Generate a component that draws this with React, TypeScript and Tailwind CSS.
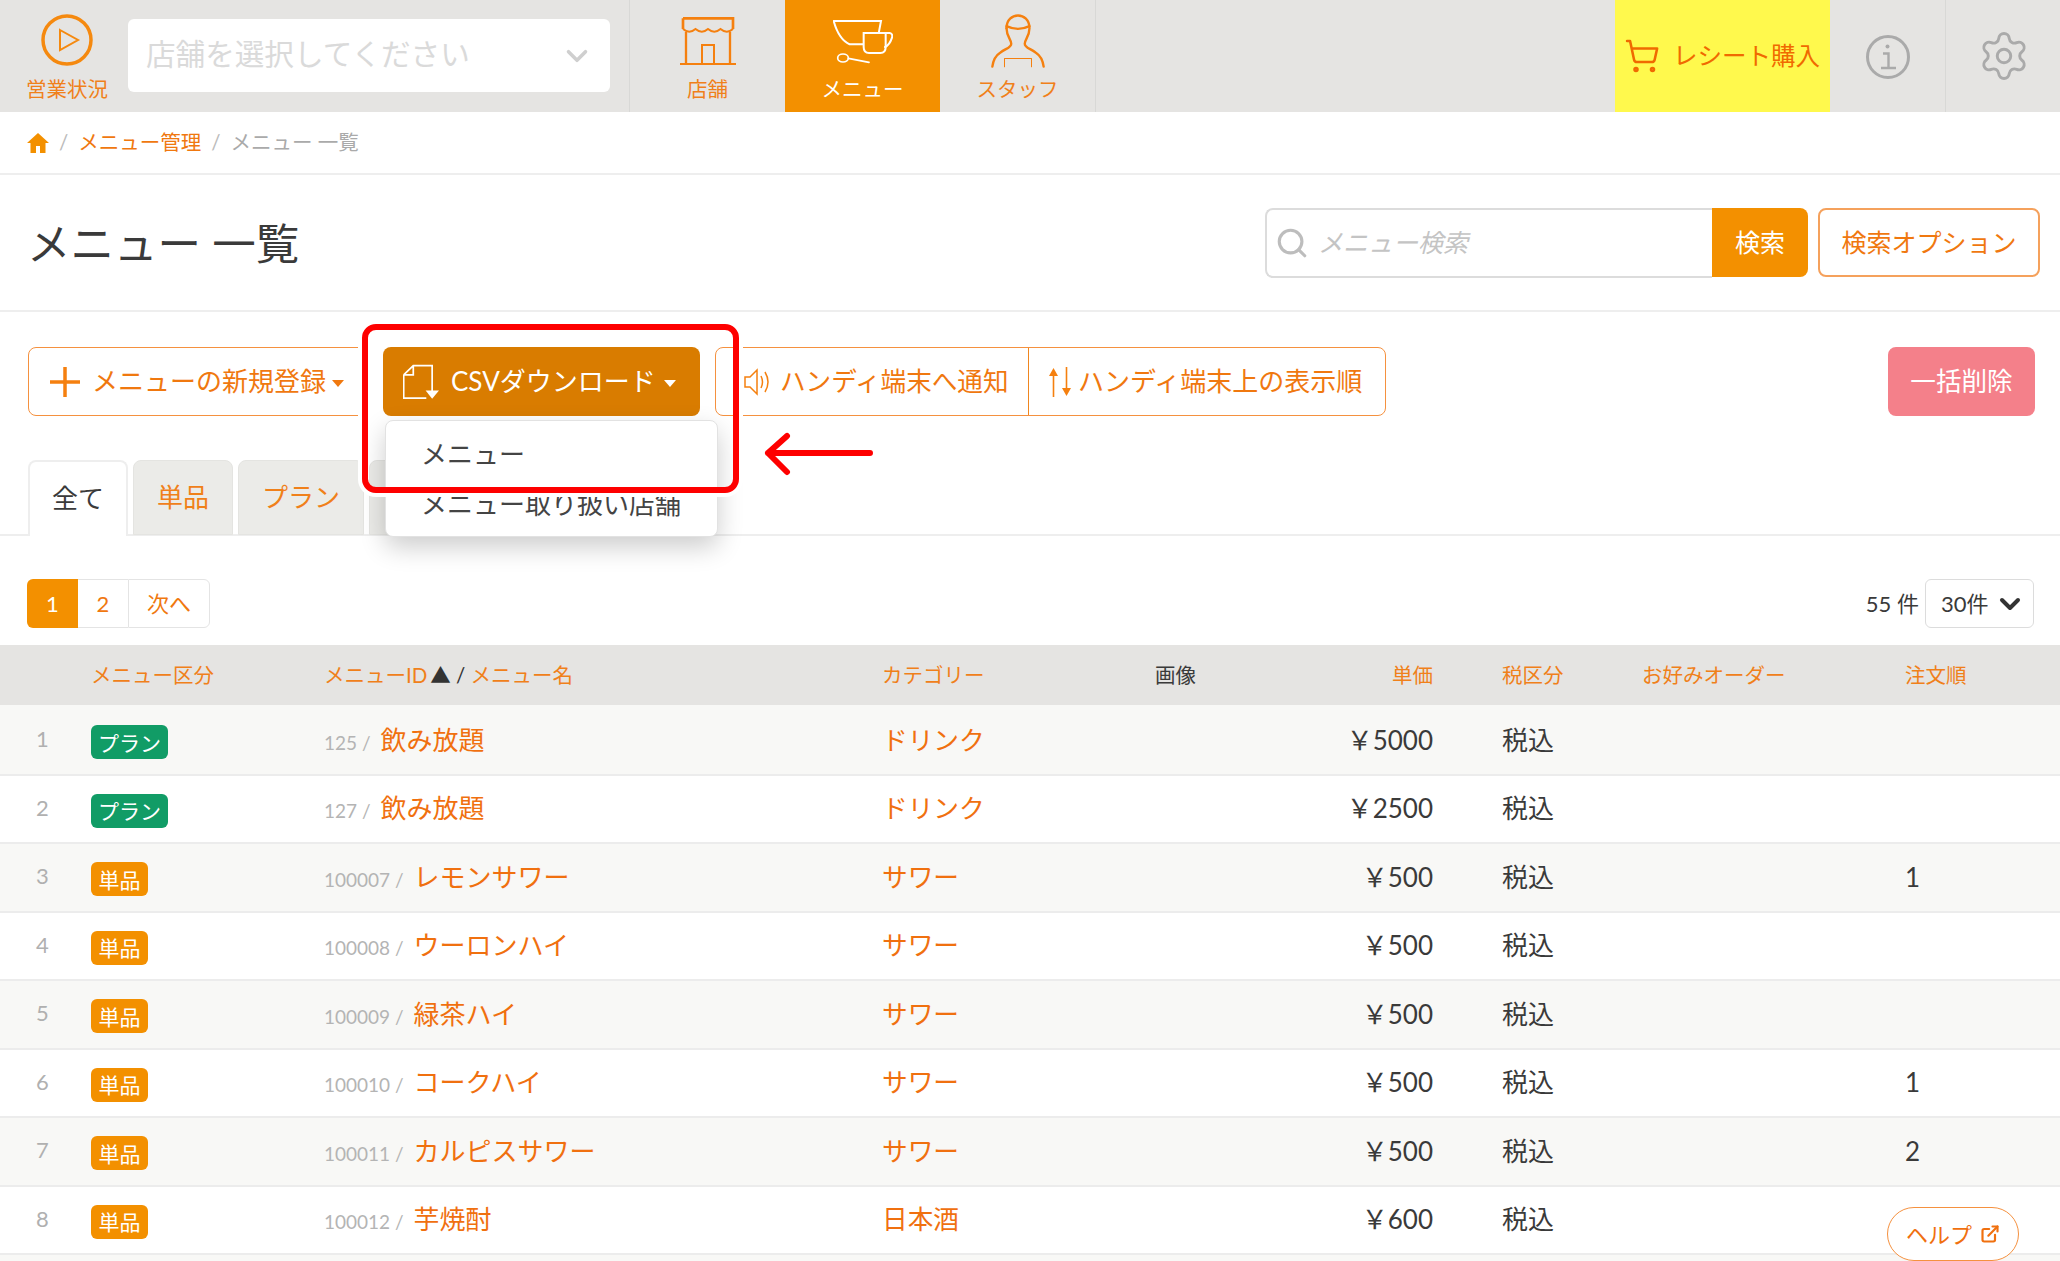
import { ChevronDown, ExternalLink, Search, Settings, ShoppingCart } from "lucide-react";

const cols = "grid grid-cols-[91px_233px_558px_273px_95px_183px_209px_263px_155px] items-center";

type Row = { kind: "plan" | "item"; id: string; name: string; category: string; price: string; order?: string };

const rows: Row[] = [
  { kind: "plan", id: "125", name: "飲み放題", category: "ドリンク", price: "5000" },
  { kind: "plan", id: "127", name: "飲み放題", category: "ドリンク", price: "2500" },
  { kind: "item", id: "100007", name: "レモンサワー", category: "サワー", price: "500", order: "1" },
  { kind: "item", id: "100008", name: "ウーロンハイ", category: "サワー", price: "500" },
  { kind: "item", id: "100009", name: "緑茶ハイ", category: "サワー", price: "500" },
  { kind: "item", id: "100010", name: "コークハイ", category: "サワー", price: "500", order: "1" },
  { kind: "item", id: "100011", name: "カルピスサワー", category: "サワー", price: "500", order: "2" },
  { kind: "item", id: "100012", name: "芋焼酎", category: "日本酒", price: "600" },
];

function PlayIcon() {
  return (
    <svg width="54" height="54" viewBox="0 0 54 54" fill="none" stroke="#f5890f">
      <circle cx="27" cy="27" r="24" strokeWidth="3.5" />
      <path d="M20 17 L38 27 L20 37 Z" strokeWidth="2" />
    </svg>
  );
}

function StoreIcon() {
  return (
    <svg width="56" height="48" viewBox="0 0 168 144" fill="none" stroke="#f5800f" strokeWidth="6">
      <path d="M9 4 H159 V36 M9 4 V36" strokeWidth="8" />
      <path d="M9 36 q19 16 37.5 0 q19 16 37.5 0 q19 16 37.5 0 q19 16 37.5 0" />
      <path d="M18 45 V140 M150 45 V140" strokeWidth="7" />
      <path d="M66 140 V84 H102 V140" />
      <path d="M0 141 H168" />
    </svg>
  );
}

function CupIcon() {
  return (
    <svg width="60" height="46" viewBox="0 0 180 138" fill="none" stroke="#fff" strokeWidth="6" strokeLinecap="round">
      <path d="M2 6 H144 L138 38 M2 6 C10 35 25 65 50 76 H90" />
      <path d="M92 42 H158 V84 Q158 102 142 102 H108 Q92 102 92 84 Z" />
      <path d="M158 42 H170 Q180 44 177 56 Q170 78 156 84" />
      <ellipse cx="30" cy="117" rx="16" ry="12" strokeWidth="5" />
      <path d="M46 118 L108 130" strokeWidth="5" />
    </svg>
  );
}

function StaffIcon() {
  return (
    <svg
      className="mb-[-3px]"
      width="54"
      height="54"
      viewBox="0 0 160 160"
      fill="none"
      stroke="#f5800f"
      strokeWidth="7"
      strokeLinecap="round"
    >
      <path d="M46 42 C46 -8 114 -8 114 42 C114 66 100 76 100 88 C100 100 116 102 132 114 C148 124 154 140 156 156" />
      <path d="M46 42 C46 66 60 76 60 88 C60 100 44 102 28 114 C12 124 6 140 4 156" />
      <path d="M46 36 Q80 52 114 36" />
      <path d="M40 132 H120 M40 132 V156 M120 132 V156" strokeWidth="3" />
    </svg>
  );
}

function InfoIcon() {
  return (
    <svg className="mt-[2px]" width="46" height="46" viewBox="0 0 46 46" fill="none" stroke="#aaa" strokeWidth="3">
      <circle cx="23" cy="23" r="20.5" />
      <circle cx="22.5" cy="12.5" r="2" fill="#aaa" stroke="none" />
      <path d="M18 19.5 H23.5 V33.5 M16 34 H31" strokeWidth="2.4" />
    </svg>
  );
}

function CsvIcon() {
  return (
    <svg width="36" height="36" viewBox="0 0 105 102" fill="none" stroke="#fff" strokeWidth="5">
      <path d="M2 30 L30 3 H85 V78 M2 30 V98 H68 M2 30 H30 V3" />
      <path d="M66 76 H105 L85 100 Z" fill="#fff" stroke="none" />
    </svg>
  );
}

function SpeakerIcon() {
  return (
    <svg width="26" height="28" viewBox="0 0 26 28" fill="none" stroke="#f5800f" strokeWidth="1.5">
      <path d="M1 9 H6 L13 2 V26 L6 19 H1 Z" />
      <path d="M17 8 Q20 14 17 20 M21 4 Q27 14 21 24" />
    </svg>
  );
}

function SortIcon() {
  return (
    <svg width="22" height="30" viewBox="0 0 22 30" fill="#f5800f" stroke="#f5800f" strokeWidth="1.6">
      <path d="M4.5 8 V30 M17.5 0 V22" fill="none" />
      <path d="M4.5 1 L9 9 H0 Z M17.5 29 L22 21 H13 Z" stroke="none" />
    </svg>
  );
}

function HomeIcon() {
  return (
    <svg width="22" height="20" viewBox="0 0 22 20" fill="#f39000">
      <path d="M11 0 L22 10 H18.5 V20 H13 V13 H9 V20 H3.5 V10 H0 Z" />
    </svg>
  );
}

function Caret({ white }: { white?: boolean }) {
  return (
    <span
      className={
        white
          ? "mt-[3px] h-0 w-0 border-x-[6px] border-t-[7px] border-x-transparent border-t-white"
          : "mt-[3px] h-0 w-0 border-x-[6px] border-t-[7px] border-x-transparent border-t-[#f0780f]"
      }
    />
  );
}

function NavItem({ label, active, children }: { label: string; active?: boolean; children: React.ReactNode }) {
  return (
    <div
      className={
        active
          ? "flex w-[155px] flex-col items-center bg-[#f39000] text-white"
          : "flex w-[155px] flex-col items-center text-[#f0801a]"
      }
    >
      <div className="flex h-[70px] items-end pb-[5px]">{children}</div>
      <span className="mt-[7px] text-[20.5px] leading-6">{label}</span>
    </div>
  );
}

function Header() {
  return (
    <header className="flex h-[112px] bg-[#e5e4e2]">
      <div className="flex w-[128px] flex-col items-center pl-[6px]">
        <div className="mt-[13px] shrink-0">
          <PlayIcon />
        </div>
        <span className="mt-[10px] shrink-0 text-[20.5px] leading-6 whitespace-nowrap text-[#f0801a]">営業状況</span>
      </div>
      <div className="mt-[19px] flex h-[73px] w-[482px] items-center justify-between rounded-[6px] bg-white pr-[16px] pl-[18px]">
        <span className="mt-[-2px] text-[29.6px] text-[#dadada]">店舗を選択してください</span>
        <ChevronDown size={34} strokeWidth={2.5} className="text-[#cfcfcf]" />
      </div>
      <div className="ml-[19px] flex border-x border-[#d8d8d6]">
        <NavItem label="店舗">
          <StoreIcon />
        </NavItem>
        <NavItem label="メニュー" active>
          <CupIcon />
        </NavItem>
        <NavItem label="スタッフ">
          <StaffIcon />
        </NavItem>
      </div>
      <div className="ml-auto flex w-[215px] items-center gap-[13px] bg-[#fff94d] pl-[9px] whitespace-nowrap text-[#f06a00]">
        <ShoppingCart size={36} strokeWidth={1.7} />
        <span className="text-[24.5px]">レシート購入</span>
      </div>
      <div className="flex w-[115px] items-center justify-center">
        <InfoIcon />
      </div>
      <div className="flex w-[115px] items-center justify-center border-l border-[#d8d8d6] pl-[2px]">
        <Settings size={54} strokeWidth={1.3} className="text-[#aaa]" />
      </div>
    </header>
  );
}

function TitleBar() {
  return (
    <>
      <nav className="flex h-[63px] items-center gap-[10px] border-b-2 border-[#eeeeee] pl-[27px] text-[20.5px]">
        <HomeIcon />
        <span className="text-[#bbb]">/</span>
        <span className="text-[#f0780f]">メニュー管理</span>
        <span className="text-[#bbb]">/</span>
        <span className="text-[#aaa]">メニュー 一覧</span>
      </nav>
      <div className="flex h-[137px] items-center justify-between border-b-2 border-[#eeeeee] pr-[20px] pl-[27px]">
        <h1 className="pt-[2px] text-[43.5px] leading-none font-normal text-[#3a3a3a]">メニュー 一覧</h1>
        <div className="flex items-center">
          <div className="flex h-[70px] w-[447px] items-center gap-[9px] rounded-l-[8px] border-2 border-r-0 border-[#dcdcdc] pl-[8px]">
            <Search size={34} strokeWidth={2.2} className="text-[#bdbdbd]" />
            <span className="text-[25px] text-[#c4c4c4] italic">メニュー検索</span>
          </div>
          <button className="h-[69px] w-[96px] rounded-r-[8px] bg-[#f39000] text-[25px] text-white">検索</button>
          <button className="ml-[10px] h-[69px] w-[222px] rounded-[8px] border-2 border-[#f5a15c] text-[25px] text-[#f0780f]">
            検索オプション
          </button>
        </div>
      </div>
    </>
  );
}

function Actions() {
  return (
    <div className="mt-[35px] flex h-[69px] pr-[25px] pl-[28px] text-[26px] whitespace-nowrap">
      <button className="flex w-[338px] items-center rounded-[8px] border border-[#f5913f] pl-[21px] text-[#f0780f]">
        <svg width="30" height="30" viewBox="0 0 30 30" stroke="#f5800f" strokeWidth="3.5">
          <path d="M15 0 V30 M0 15 H30" />
        </svg>
        <span className="ml-[12px]">メニューの新規登録</span>
        <span className="ml-[6px] flex">
          <Caret />
        </span>
      </button>
      <button className="ml-[17px] flex w-[317px] items-center rounded-[8px] bg-[#d97c00] pl-[20px] text-white">
        <CsvIcon />
        <span className="ml-[12px]">CSVダウンロード</span>
        <span className="ml-[8px] flex">
          <Caret white />
        </span>
      </button>
      <div className="ml-[15px] flex w-[671px] rounded-[8px] border border-[#f5913f] text-[#f0780f]">
        <div className="flex w-[313px] items-center border-r border-[#f0861f] pl-[28px]">
          <SpeakerIcon />
          <span className="ml-[10px] text-[25.6px]">ハンディ端末へ通知</span>
        </div>
        <div className="flex flex-1 items-center pl-[20px]">
          <SortIcon />
          <span className="ml-[7px]">ハンディ端末上の表示順</span>
        </div>
      </div>
      <button className="ml-auto w-[147px] rounded-[8px] bg-[#f4808a] text-[25.6px] text-white">一括削除</button>
    </div>
  );
}

function Tabs() {
  return (
    <div className="mt-[44px] flex h-[76px] gap-[5px] border-b-2 border-[#eeeeee] pl-[28px] text-[26px]">
      <div className="flex h-[76px] w-[100px] items-center justify-center rounded-t-[8px] border-2 border-b-0 border-[#eeeeee] bg-white pb-[2px] text-[#3a3a3a]">
        全て
      </div>
      <div className="flex h-[75px] w-[100px] items-center justify-center rounded-t-[8px] border border-[#e4e4e1] bg-[#ebebe8] text-[#f0801a]">
        単品
      </div>
      <div className="flex h-[75px] w-[126px] items-center justify-center rounded-t-[8px] border border-[#e4e4e1] bg-[#ebebe8] text-[#f0801a]">
        プラン
      </div>
      <div className="h-[75px] w-[120px] rounded-t-[8px] border border-[#e4e4e1] bg-[#ebebe8]" />
    </div>
  );
}

function Pager() {
  return (
    <div className="mt-[43px] flex h-[49px] justify-between pr-[26px] pl-[27px] text-[22px]">
      <div className="flex">
        <span className="flex w-[51px] items-center justify-center rounded-l-[6px] bg-[#f39000] text-white">1</span>
        <span className="flex w-[50px] items-center justify-center border-y border-[#e4e4e4] text-[#f0780f]">2</span>
        <span className="flex w-[82px] items-center justify-center rounded-r-[6px] border border-[#e4e4e4] text-[#f0780f]">
          次へ
        </span>
      </div>
      <div className="flex items-center text-[#3a3a3a]">
        <span>55 件</span>
        <div className="ml-[6px] flex h-[49px] w-[109px] items-center justify-between rounded-[6px] border border-[#dcdcdc] pr-[7px] pl-[15px]">
          <span>30件</span>
          <ChevronDown size={32} strokeWidth={3} className="text-[#333]" />
        </div>
      </div>
    </div>
  );
}

function MenuTable() {
  return (
    <div className="mt-[17px]">
      <div className={`${cols} h-[62px] border-b-2 border-[#f8f8f6] bg-[#e5e4e2] text-[20.5px] text-[#f0801a]`}>
        <span />
        <span>メニュー区分</span>
        <span>
          メニューID<span className="ml-[3px] text-[#333]">▲ / </span>メニュー名
        </span>
        <span>カテゴリー</span>
        <span className="text-[#3a3a3a]">画像</span>
        <span className="text-right">単価</span>
        <span className="pl-[69px]">税区分</span>
        <span>お好みオーダー</span>
        <span>注文順</span>
      </div>
      {rows.map((row, index) => (
        <div
          key={row.id}
          className={
            index % 2 === 0
              ? `${cols} h-[68.5px] border-b-2 border-[#ececec] bg-[#f8f8f6] text-[26px] text-[#3a3a3a]`
              : `${cols} h-[68.5px] border-b-2 border-[#ececec] bg-white text-[26px] text-[#3a3a3a]`
          }
        >
          <span className="pr-[6px] pb-[3px] text-center text-[22px] text-[#b0b0b0]">{index + 1}</span>
          <span className="mt-[4px]">
            {row.kind === "plan" ? (
              <span className="flex h-[34px] w-[77px] items-center justify-center rounded-[6px] bg-[#119c66] text-[21px] text-white">
                プラン
              </span>
            ) : (
              <span className="flex h-[34px] w-[57px] items-center justify-center rounded-[6px] bg-[#f39000] text-[21px] text-white">
                単品
              </span>
            )}
          </span>
          <span className="text-[#f0700f]">
            <span className="text-[19px] text-[#b4b4b4]">{row.id} / </span>
            <span className="ml-[5px]">{row.name}</span>
          </span>
          <span className="text-[25.7px] text-[#f0700f]">{row.category}</span>
          <span />
          <span className="text-right">
            {"\uFFE5"}
            {row.price}
          </span>
          <span className="pl-[69px]">税込</span>
          <span />
          <span>{row.order}</span>
        </div>
      ))}
      <div className="h-[68px] bg-[#f8f8f6]" />
    </div>
  );
}

export default function App() {
  return (
    <div className="relative h-[1261px] w-[2060px] overflow-hidden bg-white [font-family:Lato,'Noto_Sans_CJK_JP',sans-serif]">
      <Header />
      <TitleBar />
      <Actions />
      <Tabs />
      <Pager />
      <MenuTable />

      {/* open CSV dropdown */}
      <div className="absolute top-[420px] left-[385px] flex h-[117px] w-[333px] flex-col rounded-[8px] border border-[#e2e2e2] bg-white pt-[7px] pl-[35px] text-[26px] text-[#444] shadow-[0_10px_26px_rgba(0,0,0,0.2)]">
        <span className="flex h-[52px] items-center">メニュー</span>
        <span className="mt-[-2px] flex h-[52px] items-center">メニュー取り扱い店舗</span>
      </div>

      {/* annotation drawn on the capture */}
      <div className="absolute top-[324px] left-[362px] h-[169px] w-[377px] rounded-[14px] border-[6px] border-[#fe0000] shadow-[0_0_0_4px_#fff]" />
      <svg
        className="absolute top-[432px] left-[762px]"
        width="114"
        height="44"
        viewBox="0 0 114 44"
        fill="none"
        stroke="#fe0000"
        strokeWidth="6"
        strokeLinecap="round"
        strokeLinejoin="round"
      >
        <path d="M6 21 H108 M25 4 L6 21 L25 40" />
      </svg>

      <div className="absolute right-[41px] bottom-0 flex h-[54px] w-[132px] items-center justify-center gap-[8px] rounded-full border border-[#f5913f] bg-white text-[22px] text-[#f0700f]">
        <span>ヘルプ</span>
        <ExternalLink size={20} strokeWidth={2.6} />
      </div>
    </div>
  );
}
